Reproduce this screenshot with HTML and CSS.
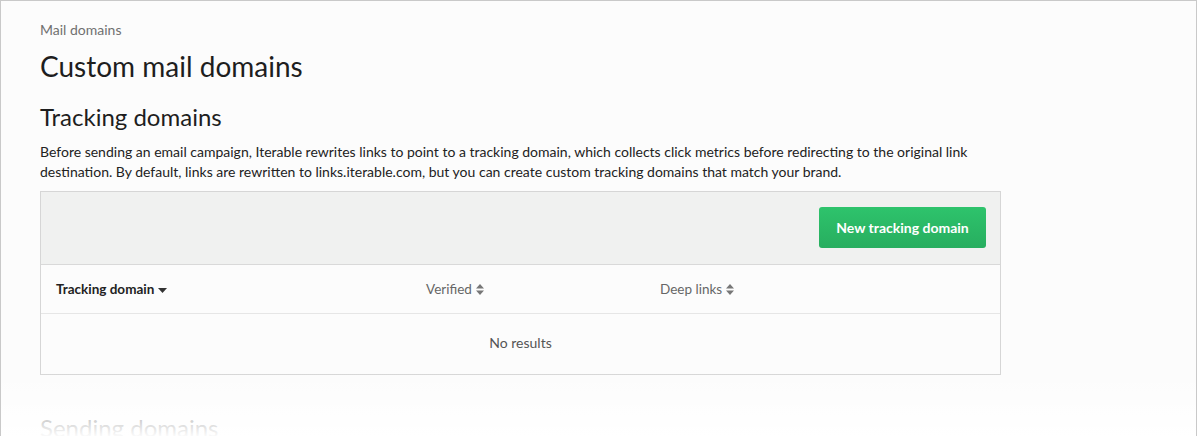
FILE: index.html
```html
<!DOCTYPE html>
<html>
<head>
<meta charset="utf-8">
<link rel="stylesheet" href="styles.css">
</head>
<body>
<div class="frame">
  <div class="page">
    <div class="crumb">Mail domains</div>
    <h1 class="title">Custom mail domains</h1>
    <h2 class="section">Tracking domains</h2>
    <p class="desc">Before sending an email campaign, Iterable rewrites links to point to a tracking domain, which collects click metrics before redirecting to the original link destination. By default, links are rewritten to links.iterable.com, but you can create custom tracking domains that match your brand.</p>
    <div class="card">
      <div class="toolbar">
        <button class="btn">New tracking domain</button>
      </div>
      <div class="thead">
        <div class="th th-active">Tracking domain
          <svg class="caret" width="9" height="5" viewBox="0 0 9 5"><path d="M0 0h9L4.5 5z" fill="#333"/></svg>
        </div>
        <div class="th">Verified
          <svg class="sort" width="8" height="11" viewBox="0 0 8 11"><path d="M0 4.5h8L4 0z M0 6.5h8L4 11z" fill="#777"/></svg>
        </div>
        <div class="th">Deep links
          <svg class="sort" width="8" height="11" viewBox="0 0 8 11"><path d="M0 4.5h8L4 0z M0 6.5h8L4 11z" fill="#777"/></svg>
        </div>
      </div>
      <div class="empty">No results</div>
    </div>
    <h2 class="section next">Sending domains</h2>
  </div>
  <div class="fade"></div>
</div>
</body>
</html>
```
FILE: styles.css
```css
* { box-sizing: border-box; }
html, body { margin: 0; padding: 0; height: 100%; }
body {
  font-family: "Lato", "Liberation Sans", sans-serif;
  color: #222;
  background: #fff;
  overflow: hidden;
}
.frame {
  height: 436px;
  border: 1px solid #c9c9c9;
  border-bottom: none;
  background: #fcfcfc;
  position: relative;
  overflow: hidden;
}
.page {
  padding: 19px 0 0 39px;
  width: 1000px;
}
.crumb {
  font-size: 14px;
  color: #707070;
  line-height: 20px;
}
.title {
  margin: 7px 0 0 0;
  font-size: 28px;
  font-weight: 400;
  line-height: 38px;
  color: #1e1e1e;
}
.section {
  margin: 16px 0 0 0;
  font-size: 24px;
  font-weight: 400;
  line-height: 32px;
  color: #1e1e1e;
}
.desc {
  margin: 9px 0 0 0;
  font-size: 14px;
  line-height: 19.5px;
  color: #222;
}
.card {
  margin-top: 10px;
  border: 1px solid #d6d6d6;
  background: #fcfcfc;
}
.toolbar {
  background: #f0f1f0;
  height: 73px;
  border-bottom: 1px solid #d9d9d9;
  display: flex;
  justify-content: flex-end;
  align-items: flex-start;
  padding: 15px 14px 0 0;
}
.btn {
  width: 167px;
  height: 41px;
  border: none;
  border-radius: 3px;
  background: linear-gradient(#2ec36c, #27ae5f);
  color: #fff;
  font-family: inherit;
  font-weight: 700;
  font-size: 14px;
  padding: 0;
}
.thead {
  display: grid;
  grid-template-columns: 370px 234px 1fr;
  height: 49px;
  align-items: center;
  border-bottom: 1px solid #e6e6e6;
}
.th {
  padding-left: 15px;
  font-size: 13.5px;
  color: #666;
  display: flex;
  align-items: center;
  gap: 4px;
}
.th-active { color: #222; font-weight: 700; }
.caret { margin-top: 3px; }
.empty {
  height: 60px;
  display: flex;
  align-items: center;
  justify-content: center;
  padding-bottom: 3px;
  font-size: 14px;
  color: #555;
}
.next { margin-top: 37px; color: #555; }
.fade {
  position: absolute;
  left: 0; right: 0; bottom: 0;
  height: 64px;
  background: linear-gradient(rgba(255,255,255,0), rgba(255,255,255,0.97));
}
```
